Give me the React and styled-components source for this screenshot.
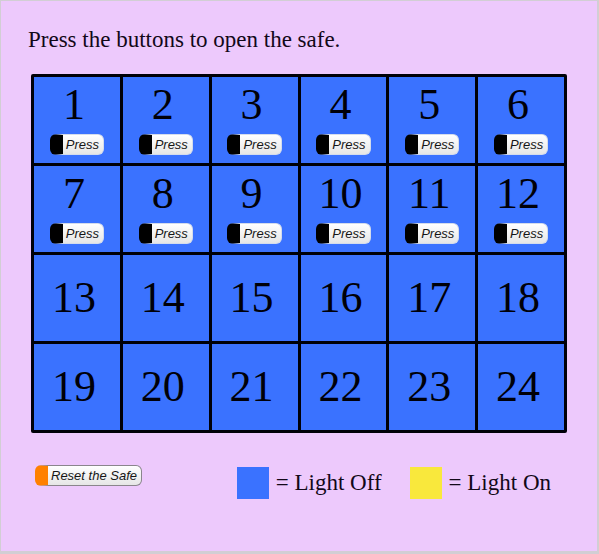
import React, { useState } from "react";
import styled, { createGlobalStyle } from "styled-components";

const GlobalStyle = createGlobalStyle`
  * {
    box-sizing: border-box;
  }
  body {
    margin: 0;
    background: #edc9fc;
    font-family: "Liberation Serif", "Times New Roman", serif;
    color: #120818;
  }
`;

const Page = styled.main`
  min-height: 100vh;
  padding: 25px 30px;
  border: 2px solid #d2ced4;
  border-width: 1px 2px 3px 1px;
  background: #edc9fc;
`;

const Instruction = styled.h1`
  margin: 0 0 20px -3px;
  font-size: 23px;
  line-height: 28px;
  font-weight: 400;
`;

const Safe = styled.section`
  display: grid;
  grid-template-columns: repeat(6, 1fr);
  grid-auto-rows: 86px;
  gap: 3px;
  padding: 3px;
  border-radius: 2px;
  background: #000008;
`;

const Cell = styled.div`
  display: flex;
  flex-direction: column;
  align-items: center;
  justify-content: ${({ $plain }) => ($plain ? "center" : "flex-start")};
  padding-top: ${({ $plain }) => ($plain ? "0" : "4px")};
  background: ${({ $lit }) => ($lit ? "#f9e83c" : "#3a72ff")};
`;

const Digits = styled.span`
  padding-right: 6px;
  font-size: 44px;
  line-height: 48px;
  color: #000008;
`;

const PillButton = styled.button`
  display: inline-flex;
  align-items: center;
  height: 21px;
  padding: 0 4px 0 3px;
  border: 1px solid ${({ $edge }) => $edge};
  border-left: 13px solid ${({ $tab }) => $tab};
  border-radius: 6px;
  background: linear-gradient(#ffffff, #e6e6e6);
  font-family: "Liberation Sans", Arial, sans-serif;
  font-size: 13px;
  line-height: 18px;
  font-style: italic;
  white-space: nowrap;
  color: #161616;
  cursor: pointer;
`;

const PressButton = styled(PillButton)`
  margin-top: 5px;
`;

const Footer = styled.footer`
  display: flex;
  align-items: flex-start;
  justify-content: space-between;
  padding: 32px 16px 0 4px;
`;

const Legend = styled.div`
  display: flex;
  gap: 28px;
`;

const LegendItem = styled.div`
  display: flex;
  align-items: center;
  gap: 7px;
  padding-top: 2px;
  font-size: 23px;
  line-height: 28px;
  white-space: nowrap;
`;

const Swatch = styled.span`
  width: 32px;
  height: 32px;
  background: ${({ $color }) => $color};
`;

const NUMBERS = Array.from({ length: 24 }, (_, i) => i + 1);
const BUTTON_COUNT = 12;

export default function App() {
  const [lit, setLit] = useState([]);
  const toggle = (n) =>
    setLit((now) => (now.includes(n) ? now.filter((m) => m !== n) : [...now, n]));

  return (
    <>
      <GlobalStyle />
      <Page>
        <Instruction>Press the buttons to open the safe.</Instruction>
        <Safe>
          {NUMBERS.map((n) => (
            <Cell key={n} $plain={n > BUTTON_COUNT} $lit={lit.includes(n)}>
              <Digits id={`light-${n}`}>{n}</Digits>
              {n <= BUTTON_COUNT && (
                <PressButton
                  type="button"
                  $tab="#000000"
                  $edge="#d4dcec"
                  aria-describedby={`light-${n}`}
                  onClick={() => toggle(n)}
                >
                  Press
                </PressButton>
              )}
            </Cell>
          ))}
        </Safe>
        <Footer>
          <PillButton type="button" $tab="#ff8000" $edge="#8a858c" onClick={() => setLit([])}>
            Reset the Safe
          </PillButton>
          <Legend>
            <LegendItem>
              <Swatch $color="#3a72ff" />= Light Off
            </LegendItem>
            <LegendItem>
              <Swatch $color="#f9e83c" />= Light On
            </LegendItem>
          </Legend>
        </Footer>
      </Page>
    </>
  );
}
